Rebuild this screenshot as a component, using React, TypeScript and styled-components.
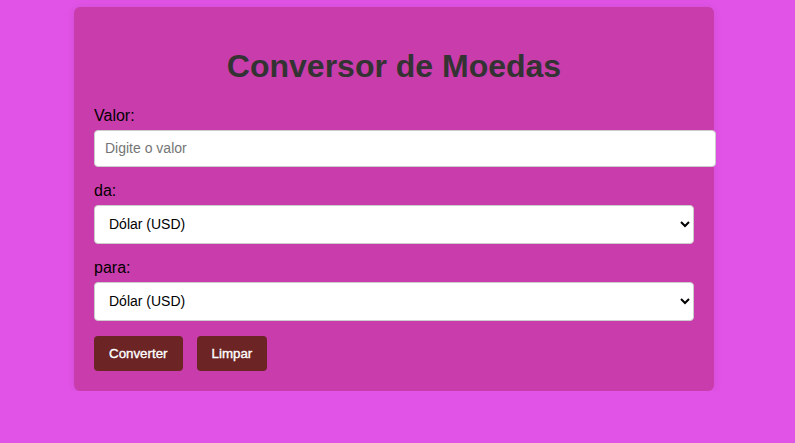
import React from "react";
import styled, { createGlobalStyle } from "styled-components";

const GlobalStyle = createGlobalStyle`
  html, body {
    margin: 0;
    padding: 0;
    background: #e153e6;
    font-family: "Liberation Sans", Arial, sans-serif;
  }
`;

const Page = styled.div`
  padding: 7px 7px 0 0;
`;

const Card = styled.div`
  width: 600px;
  margin: 0 auto;
  padding: 20px;
  background: #c93cab;
  border-radius: 6px;
  box-shadow: 0 0 8px rgba(0, 0, 0, 0.08);
`;

const Title = styled.h1`
  margin: 21.44px 0;
  font-size: 32px;
  font-weight: bold;
  color: #333;
  text-align: center;
`;

const Label = styled.label`
  display: block;
  margin-bottom: 5px;
  font-size: 16px;
  color: #000;
`;

const Input = styled.input`
  display: block;
  width: 100%;
  height: 17px;
  padding: 9px 10px;
  margin-bottom: 15px;
  font-family: "Liberation Sans", Arial, sans-serif;
  font-size: 14px;
  border: 1px solid #ccc;
  border-radius: 4px;
  background: #fff;
  box-sizing: content-box;
  &::placeholder {
    color: #757575;
  }
`;

const Select = styled.select`
  display: block;
  width: 100%;
  height: 39px;
  padding: 0 10px;
  margin-bottom: 15px;
  font-family: "Liberation Sans", Arial, sans-serif;
  font-size: 14px;
  color: #000;
  border: 1px solid #ccc;
  border-radius: 4px;
  background: #fff;
  box-sizing: border-box;
`;

const Actions = styled.div`
  display: flex;
  gap: 14px;
`;

const Button = styled.button`
  height: 35px;
  padding: 0 15px;
  border: none;
  border-radius: 4px;
  background: #6c2424;
  color: #fff;
  font-family: "Liberation Sans", Arial, sans-serif;
  font-size: 13.33px;
  font-weight: normal;
  -webkit-text-stroke: 0.35px #fff;
  cursor: pointer;
`;

const currencies = [
  "Dólar (USD)",
  "Euro (EUR)",
  "Real (BRL)",
  "Libra (GBP)",
];

export default function App() {
  return (
    <>
      <GlobalStyle />
      <Page>
        <Card>
          <Title>Conversor de Moedas</Title>
          <Label htmlFor="valor">Valor:</Label>
          <Input id="valor" type="number" placeholder="Digite o valor" />
          <Label htmlFor="de">da:</Label>
          <Select id="de" defaultValue={currencies[0]}>
            {currencies.map((c) => (
              <option key={c}>{c}</option>
            ))}
          </Select>
          <Label htmlFor="para">para:</Label>
          <Select id="para" defaultValue={currencies[0]}>
            {currencies.map((c) => (
              <option key={c}>{c}</option>
            ))}
          </Select>
          <Actions>
            <Button>Converter</Button>
            <Button>Limpar</Button>
          </Actions>
        </Card>
      </Page>
    </>
  );
}
